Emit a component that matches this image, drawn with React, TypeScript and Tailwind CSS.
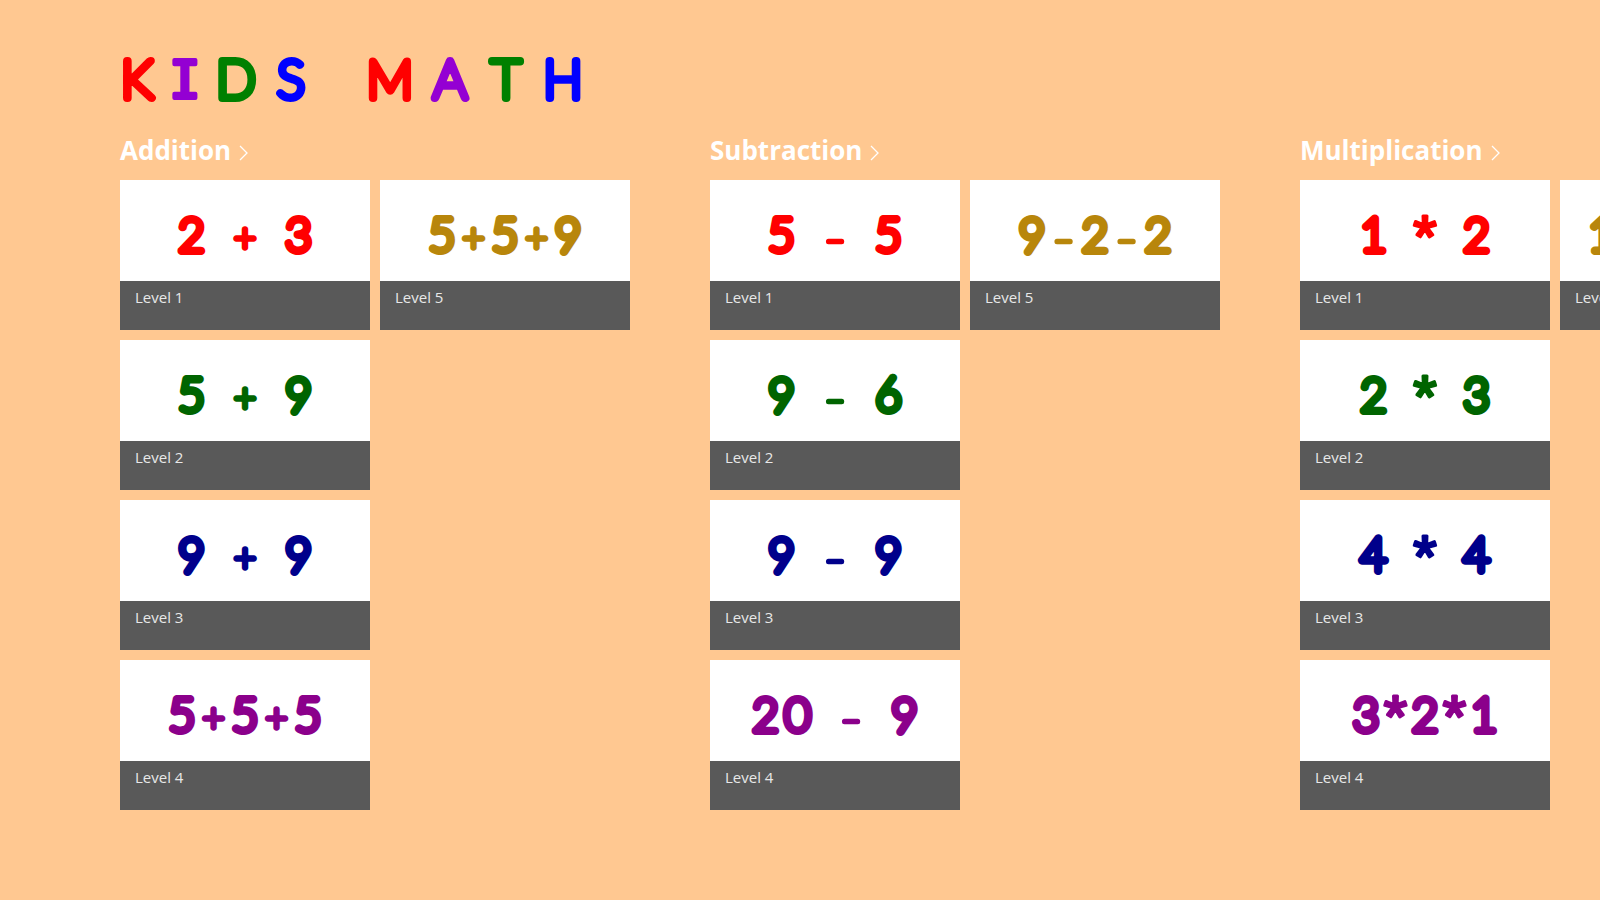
type Level = {
    name: string;
    sum: string;
    color: string;
};

type Topic = {
    name: string;
    levels: Level[];
};

const COLORS = ["#ff0000", "#006400", "#00008b", "#8b008b", "#b8860b"];

const makeTopic = (name: string, sums: string[]): Topic => ({
    name,
    levels: sums.map((sum, i) => ({ name: `Level ${i + 1}`, sum, color: COLORS[i] })),
});

const TOPICS: Topic[] = [
    makeTopic("Addition", ["2 + 3", "5 + 9", "9 + 9", "5+5+5", "5+5+9"]),
    makeTopic("Subtraction", ["5 - 5", "9 - 6", "9 - 9", "20 - 9", "9-2-2"]),
    makeTopic("Multiplication", ["1 * 2", "2 * 3", "4 * 4", "3*2*1", "10 * 10"]),
];

const LOGO = [
    { char: "K", x: 17, color: "#ff0000" },
    { char: "I", x: 65, color: "#9400d3" },
    { char: "D", x: 116, color: "#008000" },
    { char: "S", x: 171, color: "#0000ff" },
    { char: " ", x: 220, color: "#ffffff" },
    { char: "M", x: 270, color: "#ff0000" },
    { char: "A", x: 330, color: "#9400d3" },
    { char: "T", x: 386, color: "#008000" },
    { char: "H", x: 443, color: "#0000ff" },
];

// advance, font size, baseline and pen width of each kind of character on a tile
const glyphStyle = (char: string) => {
    if (char === " ") return { advance: 22, size: 45, y: 72, stroke: 8, font: "Lato" };
    if (char === "+") return { advance: 31, size: 38, y: 71, stroke: 6, font: "Lato" };
    if (char === "-") return { advance: 31, size: 60, y: 79, stroke: 5, font: "Lato" };
    if (char === "*") return { advance: 27, size: 60, y: 77, stroke: 3, font: "Liberation Sans" };
    return { advance: 32, size: 45, y: 71, stroke: 8, font: "Lato" };
};

function Logo() {
    return (
        <h1>
            <svg
                width="480"
                height="60"
                viewBox="0 0 480 60"
                className="block overflow-visible font-thin"
                fontFamily="Lato, sans-serif"
                fontSize="52"
                textAnchor="middle"
                strokeLinejoin="round"
                strokeLinecap="round"
            >
                <text y="47">
                    {LOGO.map(({ char, x, color }) => (
                        <tspan
                            key={x}
                            x={x}
                            fill={color}
                            stroke={color}
                            strokeWidth={char === "I" ? 4 : 8}
                            fontFamily={char === "I" ? "DejaVu Sans Mono, monospace" : undefined}
                        >
                            {char}
                        </tspan>
                    ))}
                </text>
            </svg>
        </h1>
    );
}

function SumArt({ sum, color }: { sum: string; color: string }) {
    const chars = sum.split("");
    const total = chars.reduce((acc, c) => acc + glyphStyle(c).advance, 0);
    let pen = 125 - total / 2;

    return (
        <svg
            viewBox="0 0 250 101"
            className="block w-full font-thin"
            textAnchor="middle"
            fill={color}
            stroke={color}
            strokeLinejoin="round"
            strokeLinecap="round"
        >
            <text>
                {chars.map((char, i) => {
                    const { advance, size, y, stroke, font } = glyphStyle(char);
                    const x = pen + advance / 2;
                    pen += advance;
                    return (
                        <tspan key={i} x={x} y={y} fontSize={size} strokeWidth={stroke} fontFamily={`${font}, sans-serif`}>
                            {char}
                        </tspan>
                    );
                })}
            </text>
        </svg>
    );
}

function Tile({ level }: { level: Level }) {
    return (
        <button className="flex w-[250px] flex-col bg-white text-left">
            <SumArt sum={level.sum} color={level.color} />
            <span className="block h-[49px] w-full bg-[#595959] px-[15px] pt-1.5 text-[15px] leading-5 text-[#e8e8e8]">
                {level.name}
            </span>
        </button>
    );
}

export default function App() {
    return (
        <main className="min-h-screen overflow-hidden bg-[#ffc891] pt-[51px] pl-[120px] font-['Open_Sans',sans-serif]">
            <Logo />

            <div className="mt-[19px] flex gap-20">
                {TOPICS.map(topic => (
                    <section key={topic.name} className="w-[510px] shrink-0">
                        <h2 className="mb-2.5">
                            <a href="#" className="flex items-center gap-2 text-[26px] leading-10 font-bold text-white">
                                {topic.name}
                                <svg width="9" height="16" viewBox="0 0 9 16" fill="none" stroke="currentColor" strokeWidth="1.3" className="mt-1.5">
                                    <path d="M1 1l7 7-7 7" />
                                </svg>
                            </a>
                        </h2>
                        <div className="grid grid-flow-col grid-rows-4 justify-start gap-2.5">
                            {topic.levels.map(level => (
                                <Tile key={level.name} level={level} />
                            ))}
                        </div>
                    </section>
                ))}
            </div>
        </main>
    );
}
